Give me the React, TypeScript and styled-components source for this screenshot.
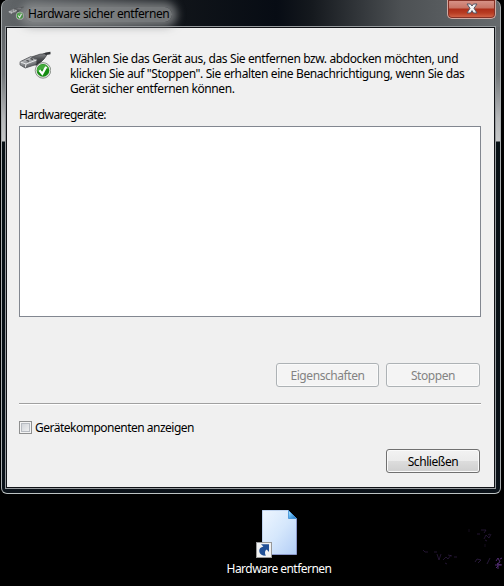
import * as React from 'react';
import styled, { createGlobalStyle } from 'styled-components';

const GlobalStyle = createGlobalStyle`
  * {
    box-sizing: border-box;
  }

  body {
    margin: 0;
    background: #000;
    overflow: hidden;
  }
`;

interface TextProps {
  $spacing?: number;
}

interface IconProps {
  size: number;
}

function UsbIcon({ size }: IconProps) {
  return (
    <svg width={size} height={size} viewBox="0 0 32 32">
      <defs>
        <linearGradient id="plug" x1="0" y1="0" x2="0" y2="1">
          <stop offset="0" stopColor="#8b8d90" />
          <stop offset="0.45" stopColor="#4b4d50" />
          <stop offset="1" stopColor="#26282a" />
        </linearGradient>
        <linearGradient id="metal" x1="0" y1="0" x2="0.4" y2="1">
          <stop offset="0" stopColor="#d9dadc" />
          <stop offset="0.55" stopColor="#9c9ea1" />
          <stop offset="1" stopColor="#56585b" />
        </linearGradient>
      </defs>
      <path d="M23 4.6Q27 2.2 31.5 2" stroke="#333538" strokeWidth="2.4" fill="none" />
      <path d="M11 6.5L21 3.2L26 2.8L27.5 4.5L25 8L18.5 14.5L13 13Z" fill="url(#plug)" stroke="#303235" strokeWidth="0.7" />
      <path d="M1.2 10.7L11.5 5.7L18 8.5L17 13.5L6.2 17L1 13.8Z" fill="url(#metal)" stroke="#55575a" strokeWidth="0.9" />
      <path d="M1.5 11L7 13L17.5 9M7 13L6.4 16.4" stroke="#e8e9ea" strokeWidth="1" fill="none" />
      <path d="M7.5 9.5L10 10.3M11.5 7.6L14 8.4" stroke="#3c3e40" strokeWidth="1.2" />
      <circle cx="24" cy="19.4" r="7.8" fill="#e0e2df" stroke="#858b84" strokeWidth="0.9" />
      <circle cx="24" cy="19.4" r="6.3" fill="#158c11" />
      <path d="M18 18Q19 13.4 24 13.4T30 18Q24 16.8 18 20.8Z" fill="#43a93b" />
      <path d="M20.4 19.3L23.3 22.8L27.2 15.8" stroke="#fff" strokeWidth="2.3" fill="none" />
    </svg>
  );
}

function CloseIcon() {
  return (
    <svg width="12" height="11" viewBox="0 0 12 11">
      <path
        d="M1 1H4.5L6 3L7.5 1H11L8 5.3L11 10H7.5L6 7.6L4.5 10H1L4 5.3Z"
        fill="#f4f4f4"
        stroke="#535666"
        strokeWidth="1"
      />
    </svg>
  );
}

function DocumentIcon() {
  return (
    <svg width="46" height="50" viewBox="0 0 46 50">
      <defs>
        <linearGradient id="sheet" x1="0" y1="0" x2="1" y2="1">
          <stop offset="0" stopColor="#eef6ff" />
          <stop offset="0.5" stopColor="#d5e7fc" />
          <stop offset="1" stopColor="#b2cdf6" />
        </linearGradient>
        <linearGradient id="fold" x1="0" y1="0" x2="1" y2="1">
          <stop offset="0" stopColor="#d5f1ff" />
          <stop offset="0.4" stopColor="#67bcf3" />
          <stop offset="1" stopColor="#1769b9" />
        </linearGradient>
      </defs>
      <path d="M6.5 0.5H32.5L40.5 8.5V44.5H6.5Z" fill="url(#sheet)" stroke="#8b98ca" />
      <path d="M6.5 44V0.5H32.5" fill="none" stroke="#bfd3ee" />
      <path d="M32.5 0.5L40.5 8.5H32.5Z" fill="url(#fold)" stroke="#3c8bd1" strokeWidth="0.8" />
      <rect x="0.5" y="32.5" width="15" height="15" fill="#f1f2f3" stroke="#989898" />
      <path
        d="M5 34.3H13V42L10.7 39.5Q7.8 41.2 9.8 45.8Q3.6 45.6 3.2 40.9Q3.3 37.6 7.4 36.6Z"
        fill="#215096"
      />
    </svg>
  );
}

// faint blossoms of the wallpaper
function Wallpaper() {
  return (
    <svg width="104" height="90" viewBox="0 0 104 90" fill="none" stroke="#382250" strokeWidth="1">
      <path d="M23 56l2 2h3M34 58h3M37 60l2 6 2-6M43 66l3-3 2 2 3-4M48 61l4 1M54 63h3M45 69l2 1" opacity="0.6" />
      <path d="M77 40h3M81 36h5l-2 3M84 45l2-4 3 3 2-4M88 41l2-1M85 46l2 1" opacity="0.6" />
      <path d="M69 35v3M85 50v3" opacity="0.35" />
      <path d="M75 68l2-3 4 1-3 3M87 70l3-6" opacity="0.7" />
      <path d="M96 67l2-3 2 4-3 2 5 1M95 71h6M98 69v6M96 74l2-2M100 65l2-1" stroke="#502c70" />
    </svg>
  );
}

const introText = `Wählen Sie das Gerät aus, das Sie entfernen bzw. abdocken möchten, und
klicken Sie auf "Stoppen". Sie erhalten eine Benachrichtigung, wenn Sie das
Gerät sicher entfernen können.`;

export default function App() {
  return (
    <>
      <GlobalStyle />
      <S.Desktop>
        <S.Window>
          <S.TitleBar>
            <S.Title>
              <UsbIcon size={16} />
              <S.TitleText>Hardware sicher entfernen</S.TitleText>
            </S.Title>
            <S.Close aria-label="Schließen">
              <CloseIcon />
            </S.Close>
          </S.TitleBar>
          <S.Dialog>
            <S.Intro>
              <UsbIcon size={32} />
              <p>{introText}</p>
            </S.Intro>
            <S.Line $spacing={-0.55}>Hardwaregeräte:</S.Line>
            <S.DeviceList />
            <S.Actions>
              <S.Button $width={103} disabled>
                Eigenschaften
              </S.Button>
              <S.Button $width={94} disabled>
                Stoppen
              </S.Button>
            </S.Actions>
            <S.Separator />
            <S.Option>
              <S.Checkbox />
              <S.Line $spacing={-0.5}>Gerätekomponenten anzeigen</S.Line>
            </S.Option>
            <S.Footer>
              <S.Button $width={94}>Schließen</S.Button>
            </S.Footer>
          </S.Dialog>
        </S.Window>
        <S.DesktopRow>
          <S.Shortcut>
            <DocumentIcon />
            <S.ShortcutLabel $spacing={-0.53}>Hardware entfernen</S.ShortcutLabel>
          </S.Shortcut>
          <Wallpaper />
        </S.DesktopRow>
      </S.Desktop>
    </>
  );
}

const Line = styled.div<TextProps>`
  height: 15px;
  white-space: nowrap;
  letter-spacing: ${({ $spacing = 0 }) => $spacing}px;
`;

const S = {
  Line,
  Desktop: styled.main`
    width: 504px;
    height: 586px;
    overflow: hidden;
    background: #000;
    font: 12px/15px 'Noto Sans', 'Open Sans', sans-serif;
    color: #000;
  `,
  Window: styled.section`
    width: 500px;
    height: 494px;
    margin-left: 1px;
    padding: 0 4px 4px 3px;
    border: 1px solid;
    border-color: #a3a7a9 #a7acae #bdc3c3 #a7acae;
    border-top: 0;
    border-radius: 7px 7px 6px 6px;
    background:
      linear-gradient(90deg, #63676a 0, #3c4043 95px, #101419 180px, #070c14 275px, #15191e 310px, #4d5154 400px, #666a6d 100%)
        0 0 / 100% 27px no-repeat,
      linear-gradient(#606467 27px, #73777a 75px, #b5b7b9 118px, #c5c7c8 141px, #071015 142px, #0a1118 100%);
  `,
  TitleBar: styled.header`
    height: 26px;
    display: flex;
    justify-content: space-between;
    align-items: flex-start;
  `,
  Title: styled.div`
    display: flex;
    align-items: center;
    gap: 5px;
    padding: 6px 0 0 3px;
  `,
  TitleText: styled.span`
    height: 15px;
    line-height: 14px;
    padding: 0 3px;
    margin-left: -4px;
    border-radius: 8px;
    white-space: nowrap;
    letter-spacing: -0.4px;
    background: rgba(145, 148, 150, 0.75);
    box-shadow: 0 0 9px 5px rgba(145, 148, 150, 0.75);
  `,
  Close: styled.button`
    width: 49px;
    height: 19px;
    padding: 0 0 2px;
    display: flex;
    align-items: center;
    justify-content: center;
    border: 1px solid #d0aaa3;
    border-top: 0;
    border-radius: 0 0 5px 5px;
    box-shadow: inset 0 0 0 1px #853126;
    background: linear-gradient(#d9958a, #c77465 8px, #ad2d18 9px, #b83c23 13px, #d66a4d);
  `,
  Dialog: styled.div`
    width: 491px;
    height: 463px;
    padding: 24px 14px 0 13px;
    border: 1px solid #95999c;
    box-shadow: inset 0 0 0 1px #101216;
    background: #f0f0f0;
  `,
  Intro: styled.div`
    display: flex;
    gap: 19px;
    height: 56px;

    & > svg {
      flex-shrink: 0;
    }

    & > p {
      margin: 0;
      white-space: pre;
      letter-spacing: -0.39px;
    }
  `,
  DeviceList: styled.div`
    height: 191px;
    margin-top: 4px;
    border: 1px solid #828790;
    background: #fff;
  `,
  Actions: styled.div`
    display: flex;
    justify-content: flex-end;
    gap: 7px;
    margin: 46px 1px 0 0;
  `,
  Button: styled.button<{ $width: number }>`
    width: ${({ $width }) => $width}px;
    height: 24px;
    padding: 0;
    border: 1px solid #707070;
    border-radius: 3px;
    box-shadow: inset 0 0 0 1px #fafafa;
    background: linear-gradient(#f2f2f2, #ebebeb 50%, #dddddd 50%, #cfcfcf);
    font: inherit;
    letter-spacing: -0.42px;
    color: #000;

    &:disabled {
      border-color: #adb2b5;
      background: #f4f4f4;
      color: #838383;
    }
  `,
  Separator: styled.div`
    height: 2px;
    margin-top: 16px;
    border-top: 1px solid #a0a0a0;
    border-bottom: 1px solid #fff;
  `,
  Option: styled.label`
    display: flex;
    align-items: center;
    gap: 3px;
    margin-top: 15px;
  `,
  Checkbox: styled.span`
    width: 13px;
    height: 13px;
    border: 1px solid #8e8f8f;
    box-shadow: inset 0 0 0 1px #f4f4f4, inset 0 0 0 2px #b8bcc2;
    background: linear-gradient(135deg, #cbcfd5, #f6f6f6);
  `,
  Footer: styled.div`
    display: flex;
    justify-content: flex-end;
    margin: 14px 1px 0 0;
  `,
  DesktopRow: styled.div`
    height: 92px;
    display: flex;
    justify-content: flex-end;
  `,
  Shortcut: styled.div`
    width: 130px;
    margin-right: 56px;
    padding-top: 16px;
    display: flex;
    flex-direction: column;
    align-items: center;
    color: #fff;
  `,
  ShortcutLabel: styled(Line)`
    margin-top: 1px;
  `,
};
